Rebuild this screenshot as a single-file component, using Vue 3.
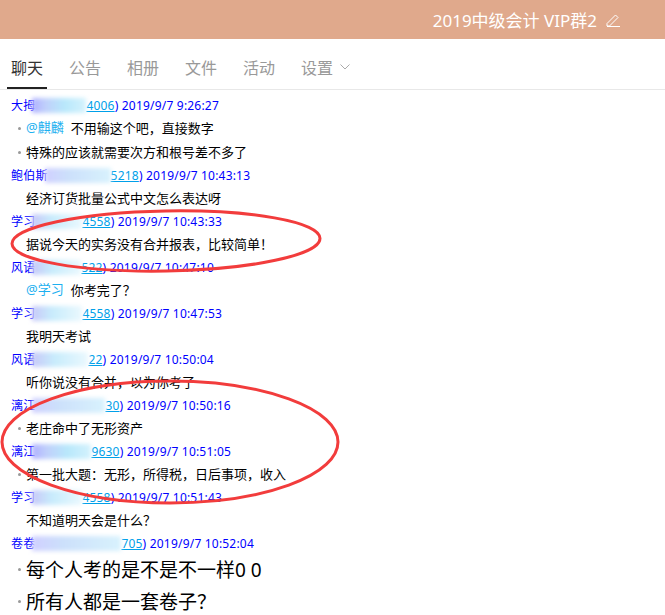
<script setup>
const tabs = ['聊天', '公告', '相册', '文件', '活动', '设置']

const rows = [
  { nick: '大拇', mask: 'a', gap: 51, tail: '4006', time: '2019/9/7 9:26:27' },
  { mention: '@麒麟', text: '不用输这个吧，直接数字', dot: true },
  { text: '特殊的应该就需要次方和根号差不多了', dot: true },
  { nick: '鲍伯斯', mask: 'b', gap: 63, tail: '5218', time: '2019/9/7 10:43:13' },
  { text: '经济订货批量公式中文怎么表达呀' },
  { nick: '学习', mask: 'c', gap: 47, tail: '4558', time: '2019/9/7 10:43:33' },
  { text: '据说今天的实务没有合并报表，比较简单！' },
  { nick: '风语', mask: 'c', gap: 46, tail: '522', time: '2019/9/7 10:47:10' },
  { mention: '@学习', text: '你考完了？' },
  { nick: '学习', mask: 'c', gap: 47, tail: '4558', time: '2019/9/7 10:47:53' },
  { text: '我明天考试' },
  { nick: '风语', mask: 'c', gap: 53, tail: '22', time: '2019/9/7 10:50:04' },
  { text: '听你说没有合并，以为你考了' },
  { nick: '漓江', mask: 'b', gap: 70, tail: '30', time: '2019/9/7 10:50:16' },
  { text: '老庄命中了无形资产', dot: true },
  { nick: '漓江', mask: 'a', gap: 56, tail: '9630', time: '2019/9/7 10:51:05' },
  { text: '第一批大题：无形，所得税，日后事项，收入', dot: true },
  { nick: '学习', mask: 'c', gap: 47, tail: '4558', time: '2019/9/7 10:51:43' },
  { text: '不知道明天会是什么？' },
  { nick: '卷卷', mask: 'b', gap: 86, tail: '705', time: '2019/9/7 10:52:04' },
  { text: '每个人考的是不是不一样0 0', dot: true, big: true },
  { text: '所有人都是一套卷子？', dot: true, big: true },
]
</script>

<template>
  <div class="page">
    <header class="top">
      <span class="title">2019中级会计 VIP群2</span>
      <svg class="pencil" width="14" height="14" viewBox="0 0 14 14" fill="none" stroke="#fff" stroke-width="1">
        <path d="M1 10.500 9.500 2 12 4.500 3.500 13H1ZM1 13.500h13" />
      </svg>
    </header>

    <nav class="tabs">
      <div v-for="(tab, i) in tabs" :key="tab" class="tab" :class="{ active: i === 0 }">
        {{ tab }}
        <svg v-if="tab === '设置'" class="chev" width="10" height="6" viewBox="0 0 10 6" fill="none" stroke="#aaa">
          <path d="M.5.5 5 5 9.500.5" />
        </svg>
      </div>
    </nav>

    <div class="list">
      <template v-for="(row, i) in rows" :key="i">
        <div v-if="row.nick" class="head">
          <span>{{ row.nick }}</span>
          <a class="qq">
            <span class="mask" :class="row.mask" :style="{ width: row.gap + 3 + 'px' }"></span>{{ row.tail }}</a>)
          <span class="time">{{ row.time }}</span>
        </div>
        <div v-else class="msg" :class="{ big: row.big }">
          <i v-if="row.dot" class="dot"></i>
          <span v-if="row.mention" class="at">{{ row.mention }}</span>
          <span>{{ row.text }}</span>
        </div>
      </template>
    </div>

    <svg class="marks" width="665" height="615" fill="none" stroke="#f23c3c" stroke-width="3">
      <ellipse cx="166" cy="241" rx="154" ry="30" transform="rotate(-1 166 241)" />
      <ellipse cx="170" cy="442" rx="168" ry="61" />
    </svg>
  </div>
</template>

<style scoped>
.page {
  position: relative;
  width: 665px;
  height: 615px;
  overflow: hidden;
  background: #fff;
  font-family: "Noto Sans", "Noto Sans CJK SC", sans-serif;
}

.top {
  height: 39px;
  display: flex;
  align-items: center;
  justify-content: flex-end;
  gap: 9px;
  padding-right: 45px;
  background: #e0a98c;
  color: #fff;
  font-size: 17px;
}

.pencil {
  flex: none;
}

.tabs {
  height: 50px;
  display: flex;
  gap: 18px;
  padding-left: 7px;
  border-bottom: 1px solid #e8e8e8;
  font-size: 16px;
  color: #999;
}

.tab {
  display: flex;
  align-items: center;
  gap: 7px;
  height: 50px;
  padding: 5px 4px 0;
  box-sizing: border-box;
}

.tab.active {
  color: #333;
  border-bottom: 2px solid #222;
  padding-top: 7px;
}

.list {
  padding: 5px 0 0 11px;
}

.head {
  height: 22px;
  line-height: 22px;
  font-size: 12px;
  color: #0000ff;
  white-space: nowrap;
  letter-spacing: .2px;
}

.qq {
  color: #00a0e9;
  text-decoration: underline;
}

.mask {
  display: inline-block;
  height: 15px;
  margin-left: -3px;
  vertical-align: -3px;
  filter: blur(2px);
}

.mask.a {
  background: linear-gradient(90deg, #b0b0ff, #c0d0fb 25%, #b8e8fb 60%, #d4f2fd);
}

.mask.b {
  background: linear-gradient(90deg, #d0d0ff, #cce0fb 35%, #d8f2fd);
}

.mask.c {
  background: linear-gradient(90deg, #c8c8f8, #c8ecfc 40%, #eaf8fe);
}

.msg {
  position: relative;
  height: 24px;
  line-height: 24px;
  padding-left: 15px;
  font-size: 13px;
  color: #000;
  white-space: nowrap;
  margin-top: -1px;
  margin-bottom: 1px;
}

.msg.big {
  height: 32px;
  line-height: 32px;
  font-size: 19px;
}

.dot {
  position: absolute;
  left: 7px;
  top: 11px;
  width: 3px;
  height: 3px;
  border-radius: 50%;
  background: #999;
}

.msg.big .dot {
  top: 14px;
}

.at {
  color: #1cb0f0;
  margin-right: 7px;
  position: relative;
  top: -1px;
}

.marks {
  position: absolute;
  left: 0;
  top: 0;
  pointer-events: none;
}
</style>
